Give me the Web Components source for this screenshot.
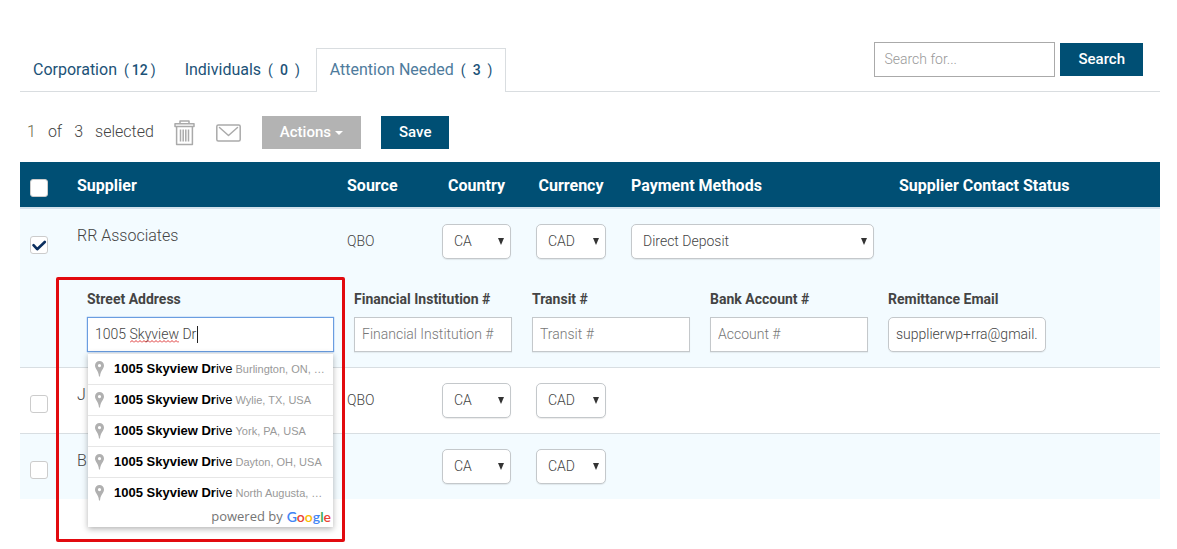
<!DOCTYPE html>
<html lang="en">
<head>
<meta charset="utf-8">
<title>Suppliers</title>
<style>
  body { margin: 0; min-height: 100vh; background: #fff; color: #444; font: 300 14px/20px Roboto, "Liberation Sans", sans-serif; }
</style>
</head>
<body>
<supplier-page></supplier-page>
<script>
const define = (name, render, after) => customElements.define(name, class extends HTMLElement {
  connectedCallback() {
    if (this.shadowRoot) return;
    this.attachShadow({ mode: 'open' }).innerHTML = render(this);
    if (after) after(this);
  }
});
const attr = (el, name, fallback = '') => el.getAttribute(name) || fallback;

/* Push button, primary or muted */
define('ui-button', el => `
  <style>
    :host { display: block; }
    button { display: flex; align-items: center; gap: 4px; height: 33px; padding: 0 18px 2px; border: 0; border-radius: 0;
      background: #004f74; color: #fff; font: 500 15px/20px Roboto, sans-serif; cursor: pointer; }
    :host([muted]) button { background: #b3b3b3; }
    svg { width: 8px; height: 4px; fill: currentColor; margin-top: 2px; }
  </style>
  <button type="button"><slot></slot>${el.hasAttribute('caret') ? '<svg viewBox="0 0 8 4"><path d="M0 0h8L4 4z"/></svg>' : ''}</button>`);

/* Tab with a count */
define('ui-tab', el => `
  <style>
    :host { display: block; }
    a { display: flex; align-items: center; height: 42px; padding: 0 13px 0 12px; border: 1px solid transparent; border-bottom: 0;
      margin-right: 2px; color: #1c5277; text-decoration: none; font: 400 16px/20px Roboto, sans-serif; }
    :host([active]) a { border-color: #d9dde0; background: #fff; color: #4e7b9c; padding: 0 13px 1px; margin-bottom: -1px; margin-right: 0; }
    .count { display: flex; margin-left: 7px; color: #1c5277; font-size: 14px; }
    b { width: 22px; text-align: center; font-weight: 500; }
  </style>
  <a href="#"><slot></slot><span class="count">(<b>${attr(el, 'count')}</b>)</span></a>`);

/* Tick box */
define('ui-check', el => `
  <style>
    :host { display: block; width: 18px; height: 18px; position: relative; }
    input { appearance: none; display: block; width: 18px; height: 18px; margin: 0; box-sizing: border-box;
      background: #fff; border: 1px solid #ccc; border-radius: 3px; }
    svg { position: absolute; inset: 0; display: none; pointer-events: none; }
    input:checked + svg { display: block; }
  </style>
  <input type="checkbox" aria-label="${attr(el, 'label')}" ${el.hasAttribute('checked') ? 'checked' : ''}>
  <svg width="18" height="18" viewBox="0 0 18 18" fill="none" stroke="#0b2f5f" stroke-width="2.6" stroke-linecap="round" stroke-linejoin="round"><path d="M3.5 9.2 7.2 13.2 14.8 6"/></svg>`);

/* Drop-down */
define('ui-select', el => `
  <style>
    :host { display: block; position: relative; }
    select { appearance: none; display: block; width: 100%; height: 35px; box-sizing: border-box; padding: 0 11px 2px; margin: 0;
      background: #fff; border: 1px solid #c4c8cb; border-radius: 5px; color: #444; font: 300 14px/20px Roboto, sans-serif;
      box-shadow: 0 1px 1px rgba(0,0,0,.08); }
    :host::after { content: ""; position: absolute; right: 7px; top: 14px; width: 6px; height: 7px; background: #333;
      clip-path: polygon(0 0, 100% 0, 50% 100%); pointer-events: none; }
  </style>
  <select aria-label="${attr(el, 'label')}"><option>${attr(el, 'value')}</option></select>`);

/* Labelled text box; the slot holds anything that hangs from it */
define('ui-field', el => `
  <style>
    :host { display: block; position: relative; }
    label { display: block; margin-bottom: 10px; font: 700 14px/16px Roboto, sans-serif; color: #444; }
    input { display: block; width: 100%; height: 35px; box-sizing: border-box; margin: 0; padding: 0 7px 2px; background: #fff;
      border: 1px solid #c4c8cb; border-radius: 0; outline: 0; color: #444; font: 300 14px/20px Roboto, sans-serif;
      box-shadow: 0 1px 1px rgba(0,0,0,.06); }
    input::placeholder { color: #777; opacity: 1; }
    :host([search]) input { border-color: #aaa; padding: 0 9px 2px; box-shadow: none; }
    :host([search]) input::placeholder { color: #999; }
    :host([rounded]) input { border-radius: 5px; }
    :host([active]) input { border-color: #6a9de0; box-shadow: 0 0 1px #4f8fe6; }
  </style>
  ${attr(el, 'label') ? `<label for="box">${attr(el, 'label')}</label>` : ''}
  <input id="box" type="text" spellcheck="false" placeholder="${attr(el, 'placeholder')}" value="${attr(el, 'value')}"
    ${attr(el, 'label') ? '' : `aria-label="${attr(el, 'placeholder')}"`}>
  <slot></slot>`);

/* Spelling mark and text cursor over the address box */
define('typing-marks', () => `
  <style>
    :host { position: absolute; left: 8px; right: 8px; bottom: 9px; height: 18px; pointer-events: none; }
    svg { position: absolute; left: 35px; bottom: 0; }
    i { position: absolute; left: 102px; top: 1px; width: 1px; height: 17px; background: #222; }
  </style>
  <svg width="49" height="3"><defs><pattern id="wave" width="4" height="3" patternUnits="userSpaceOnUse"><path d="M0 2.5 2 .5 4 2.5" fill="none" stroke="#d33" stroke-width="1"/></pattern></defs><rect width="49" height="3" fill="url(#wave)"/></svg>
  <i></i>`);

/* One address suggestion */
define('place-option', () => `
  <style>
    :host { display: flex; align-items: center; height: 30px; padding: 0 4px 0 7px; border-top: 1px solid #e6e6e6;
      white-space: nowrap; color: #999; font: 400 11px/30px "Liberation Sans", Arial, sans-serif; }
    svg { width: 9px; height: 16px; margin-right: 10px; fill: #b0b0b0; flex: none; }
    .main { color: #000; font-size: 13px; margin-right: 3px; }
  </style>
  <svg viewBox="0 0 9 16"><path fill-rule="evenodd" d="M4.5 0A4.5 4.5 0 0 0 0 4.5C0 8 3.6 9.500 4 15.500h1C5.400 9.500 9 8 9 4.500A4.500 4.500 0 0 0 4.500 0zM4.500 3a1.600 1.600 0 1 1 0 3.200 1.600 1.600 0 0 1 0-3.200z"/></svg>
  <span class="main"><b>1005 Skyview Dr</b>ive</span><slot></slot>`);

define('place-list', () => `
  <style>
    :host { position: absolute; z-index: 2; left: 1px; right: 1px; top: 62px; background: #fff; box-shadow: 0 2px 6px rgba(0,0,0,.3); }
    .credit { display: flex; justify-content: flex-end; gap: 4px; padding: 0 2px 2px 0; color: #757575; font: 400 13px/17px "Open Sans", sans-serif; }
    .google { font: 600 14px/17px Lato, sans-serif; }
    .b { color: #4285f4; } .r { color: #ea4335; } .y { color: #fbbc05; } .g { color: #34a853; }
  </style>
  <slot></slot>
  <div class="credit"><span>powered by</span><span class="google"><span class="b">G</span><span class="r">o</span><span class="y">o</span><span class="b">g</span><span class="g">l</span><span class="r">e</span></span></div>`);

/* Red frame drawn round the address field and its list */
define('focus-frame', () => `
  <style>
    :host { position: absolute; z-index: 3; top: -14px; left: -31px; right: -11px; height: 265px; box-sizing: border-box;
      border: 3px solid #e20a0f; border-radius: 2px; pointer-events: none; }
  </style>`);

define('supplier-table', () => `
  <style>
    :host { display: block; }
    table { width: 100%; table-layout: fixed; border-collapse: separate; border-spacing: 0; }
    .c0 { width: 47px; } .c1 { width: 270px; } .c2, .c4 { width: 95px; } .c3 { width: 94px; } .c5 { width: 268px; }
    th, td { padding: 0 15px 0 10px; text-align: left; vertical-align: middle; box-sizing: border-box; }
    th { height: 47px; padding-top: 2px; background: #004f74; color: #fff; font: 700 16px/20px Roboto, sans-serif; border-bottom: 2px solid #d3e2ec; white-space: nowrap; }
    th.mid { text-align: center; }
    th.tick { vertical-align: top; padding-top: 17px; }
    td { padding-top: 15px; padding-bottom: 15px; }
    td.tick { vertical-align: top; padding-top: 27px; padding-bottom: 0; }
    td.name { vertical-align: top; padding-top: 17px; padding-bottom: 0; font-size: 16px; }
    td.source { padding-bottom: 17px; }
    .tint td { background: #f3fbff; }
    .line td { border-bottom: 1px solid #d8dee2; }
    td.detail { padding: 17px 15px 15px 67px; }
    .fields { display: grid; grid-template-columns: 247px repeat(4, 158px); gap: 20px; }
  </style>
  <table>
    <colgroup><col class="c0"><col class="c1"><col class="c2"><col class="c3"><col class="c4"><col class="c5"><col></colgroup>
    <thead><tr>
      <th class="tick"><ui-check label="Select all"></ui-check></th><th>Supplier</th><th>Source</th><th class="mid">Country</th>
      <th class="mid">Currency</th><th>Payment Methods</th><th>Supplier Contact Status</th>
    </tr></thead>
    <tbody>
      <tr class="tint">
        <td class="tick"><ui-check label="Select RR Associates" checked></ui-check></td><td class="name">RR Associates</td><td class="source">QBO</td>
        <td><ui-select label="Country" value="CA"></ui-select></td><td><ui-select label="Currency" value="CAD"></ui-select></td>
        <td><ui-select label="Payment method" value="Direct Deposit"></ui-select></td><td></td>
      </tr>
      <tr class="tint line"><td class="detail" colspan="7"><div class="fields">
        <ui-field label="Street Address" value="1005 Skyview Dr" active>
          <typing-marks></typing-marks>
          <place-list>
            <place-option>Burlington, ON, …</place-option>
            <place-option>Wylie, TX, USA</place-option>
            <place-option>York, PA, USA</place-option>
            <place-option>Dayton, OH, USA</place-option>
            <place-option>North Augusta, …</place-option>
          </place-list>
          <focus-frame></focus-frame>
        </ui-field>
        <ui-field label="Financial Institution #" placeholder="Financial Institution #"></ui-field>
        <ui-field label="Transit #" placeholder="Transit #"></ui-field>
        <ui-field label="Bank Account #" placeholder="Account #"></ui-field>
        <ui-field label="Remittance Email" value="supplierwp+rra@gmail." rounded></ui-field>
      </div></td></tr>
      <tr class="line">
        <td class="tick"><ui-check label="Select supplier"></ui-check></td><td class="name">J</td><td class="source">QBO</td>
        <td><ui-select label="Country" value="CA"></ui-select></td><td><ui-select label="Currency" value="CAD"></ui-select></td><td></td><td></td>
      </tr>
      <tr class="tint">
        <td class="tick"><ui-check label="Select supplier"></ui-check></td><td class="name">B</td><td></td>
        <td><ui-select label="Country" value="CA"></ui-select></td><td><ui-select label="Currency" value="CAD"></ui-select></td><td></td><td></td>
      </tr>
    </tbody>
  </table>`);

define('selection-bar', () => `
  <style>
    :host { display: flex; align-items: center; padding: 24px 7px 13px; }
    .text { display: flex; gap: 12px; font-size: 16px; margin-right: 20px; padding-bottom: 2px; }
    .one { color: #6d6a4a; }
    .icon { display: block; padding: 0; margin: 0 21px 0 0; border: 0; background: none; }
    svg { display: block; fill: none; stroke: #aaa; }
    ui-button { margin-right: 20px; }
  </style>
  <span class="text"><span class="one">1</span><span>of</span><span>3</span><span>selected</span></span>
  <button class="icon" type="button" aria-label="Delete"><svg width="21" height="26" viewBox="0 0 21 26" stroke-width="1.500" stroke-linejoin="round"><path d="M6 3.500V1h9v2.500M1 3.800h19v2.700H1zM2.600 6.500V24.500h15.800V6.500M6.500 9.500v12M9.200 9.500v12M11.800 9.500v12M14.500 9.500v12"/></svg></button>
  <button class="icon" type="button" aria-label="Send email"><svg width="25" height="18" viewBox="0 0 25 18" stroke-width="1.500" stroke-linejoin="round" stroke-linecap="round"><rect x=".8" y="1" width="23.400" height="16" rx="1.500"/><path d="M3.500 3.500 12.500 11.500 21.500 3.500"/></svg></button>
  <ui-button muted caret>Actions</ui-button>
  <ui-button>Save</ui-button>`);

define('tab-bar', () => `
  <style>
    :host { display: flex; align-items: flex-end; justify-content: space-between; padding-top: 42px; border-bottom: 1px solid #d9dde0; }
    nav, .search { display: flex; align-items: center; }
    .search { gap: 5px; padding: 0 17px 14px 0; }
    ui-field { width: 181px; }
  </style>
  <nav><ui-tab count="12">Corporation</ui-tab><ui-tab count="0">Individuals</ui-tab><ui-tab count="3" active>Attention Needed</ui-tab></nav>
  <div class="search"><ui-field search placeholder="Search for..."></ui-field><ui-button>Search</ui-button></div>`);

/* The bottom padding leaves room for the open address list */
define('supplier-page', () => `
  <style>:host { display: block; padding: 0 17px 50px 20px; }</style>
  <tab-bar></tab-bar><selection-bar></selection-bar><supplier-table></supplier-table>`);
</script>
</body>
</html>
